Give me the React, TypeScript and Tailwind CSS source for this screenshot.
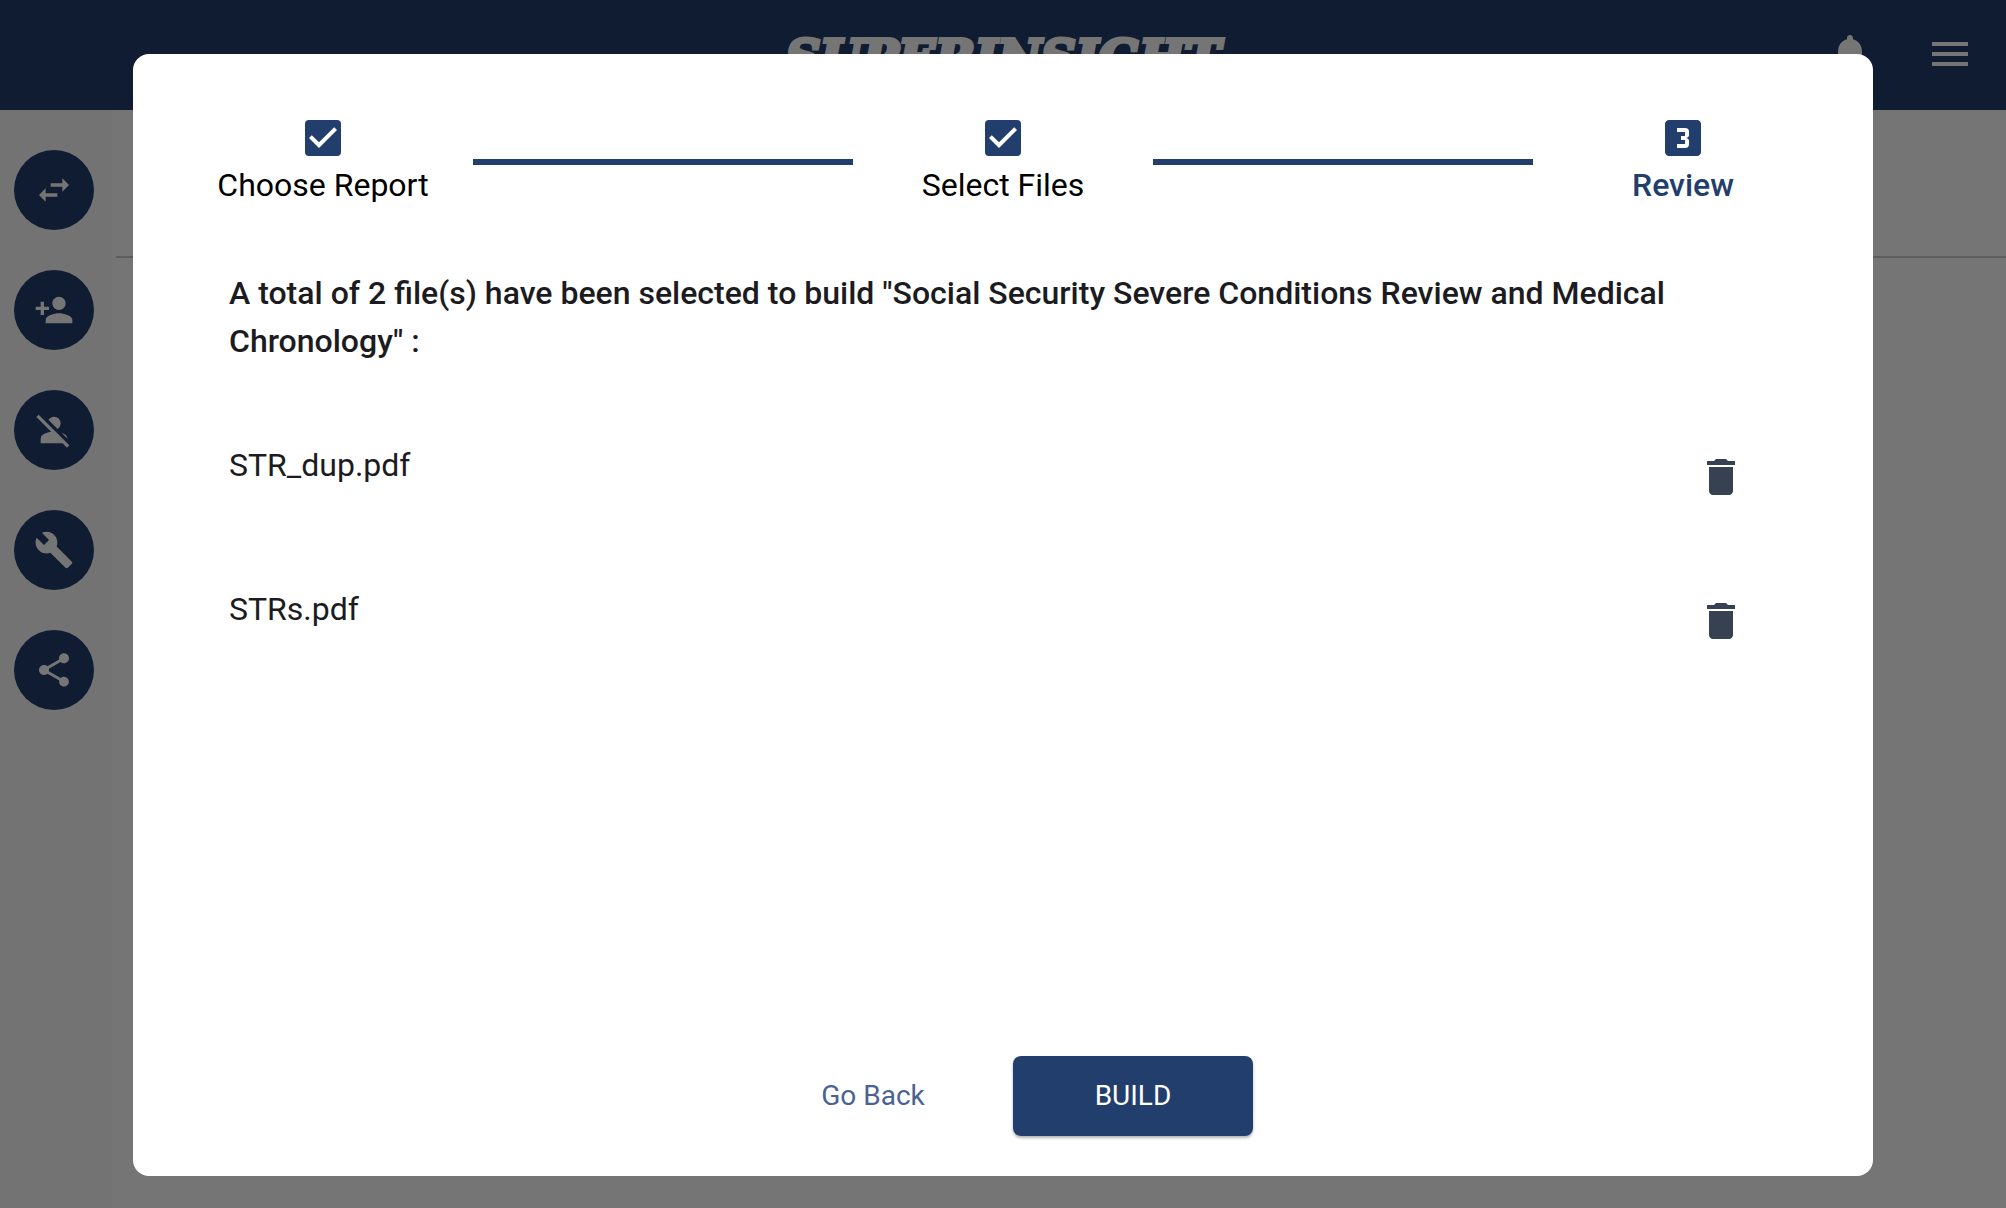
import React from "react";
import {
  MdSwapHoriz,
  MdPersonAdd,
  MdPersonOff,
  MdBuild,
  MdShare,
  MdNotifications,
  MdMenu,
  MdCheckBox,
  MdLooks3,
  MdDelete,
} from "react-icons/md";

const tools = [
  { label: "Switch", Icon: MdSwapHoriz },
  { label: "Add person", Icon: MdPersonAdd },
  { label: "Remove person", Icon: MdPersonOff },
  { label: "Tools", Icon: MdBuild },
  { label: "Share", Icon: MdShare },
];

const files = ["STR_dup.pdf", "STRs.pdf"];

function Header() {
  return (
    <header className="grid h-[110px] grid-cols-[1fr_auto_1fr] items-center bg-[#223e6d] px-8 pb-[2px] text-white">
      <span />
      <span className="mt-2 font-['DejaVu_Serif'] text-[48px] leading-[48px] font-bold italic [-webkit-text-stroke:4px_white]">
        SUPERINSIGHT
      </span>
      <div className="flex items-center justify-end gap-[52px]">
        <button aria-label="Notifications">
          <MdNotifications className="size-12" />
        </button>
        <button aria-label="Menu">
          <MdMenu className="size-12" />
        </button>
      </div>
    </header>
  );
}

function Sidebar() {
  return (
    <nav className="flex w-28 flex-col gap-10 bg-[#fafafa] px-[14px] pt-10">
      {tools.map(({ label, Icon }) => (
        <button
          key={label}
          aria-label={label}
          className="flex size-20 items-center justify-center rounded-full bg-[#223e6d] text-white"
        >
          <Icon className="size-10" />
        </button>
      ))}
    </nav>
  );
}

function Step({ label, Icon, active }: { label: string; Icon: React.ElementType; active?: boolean }) {
  return (
    <li className="flex w-[300px] flex-col items-center">
      <Icon className="size-12 text-[#223e6d]" />
      <span
        className={
          active
            ? "text-[32px] leading-[46px] font-medium text-[#223e6d]"
            : "text-[32px] leading-[46px] text-black"
        }
      >
        {label}
      </span>
    </li>
  );
}

function Connector() {
  return <li aria-hidden="true" className="mt-[45px] h-[6px] flex-1 bg-[#223e6d]" />;
}

function ReviewDialog() {
  return (
    <section
      role="dialog"
      aria-modal="true"
      aria-label="Build report"
      className="flex flex-1 flex-col rounded-2xl bg-white px-10 pt-[60px] pb-10"
    >
      <ol className="flex items-start">
        <Step label="Choose Report" Icon={MdCheckBox} />
        <Connector />
        <Step label="Select Files" Icon={MdCheckBox} />
        <Connector />
        <Step label="Review" Icon={MdLooks3} active />
      </ol>

      <div className="mt-[61px] flex-1 pr-[88px] pl-14 text-[#1c1b1f]">
        <h1 className="text-[32px] leading-[48px] font-medium">
          A total of 2 file(s) have been selected to build "Social Security Severe Conditions Review and
          Medical Chronology" :
        </h1>
        <ul className="mt-[76px]">
          {files.map((name) => (
            <li key={name} className="flex h-36 items-start justify-between">
              <span className="text-[32px] leading-[48px]">{name}</span>
              <button aria-label={"Remove " + name} className="mt-3 text-[#374151]">
                <MdDelete className="size-12" />
              </button>
            </li>
          ))}
        </ul>
      </div>

      <footer className="flex justify-center gap-5 text-[28px]">
        <button className="h-20 w-60 rounded-lg text-[#4a6293]">Go Back</button>
        <button className="h-20 w-60 rounded-lg bg-[#223e6d] text-white shadow-[0_2px_3px_rgba(0,0,0,0.3)]">
          BUILD
        </button>
      </footer>
    </section>
  );
}

export default function App() {
  return (
    <div className="relative flex min-h-screen flex-col bg-white font-[Roboto,sans-serif]">
      <Header />
      <div className="flex flex-1 gap-1">
        <Sidebar />
        <main className="flex-1">
          <div className="mt-[146px] h-[2px] bg-[#cac8d0]" />
        </main>
      </div>
      <div className="absolute inset-0 flex bg-black/54 px-[133px] pt-[54px] pb-8">
        <ReviewDialog />
      </div>
    </div>
  );
}
